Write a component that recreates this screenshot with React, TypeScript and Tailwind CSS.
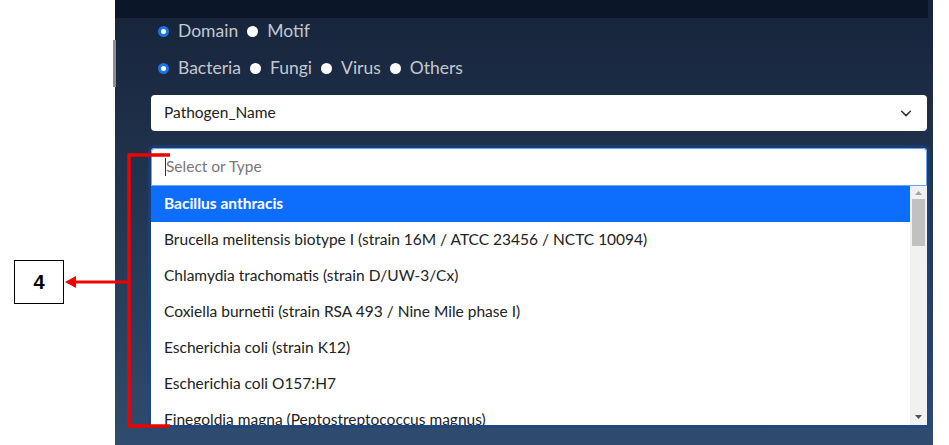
import React from 'react';

const pathogens = [
  'Bacillus anthracis',
  'Brucella melitensis biotype I (strain 16M / ATCC 23456 / NCTC 10094)',
  'Chlamydia trachomatis (strain D/UW-3/Cx)',
  'Coxiella burnetii (strain RSA 493 / Nine Mile phase I)',
  'Escherichia coli (strain K12)',
  'Escherichia coli O157:H7',
  'Finegoldia magna (Peptostreptococcus magnus)',
];

const Radio: React.FC<{ label: string; checked?: boolean }> = ({ label, checked }) => (
  <label className="flex items-center gap-[9px]">
    {checked ? (
      <span className="w-[11px] h-[11px] rounded-full border-[3px] border-[#1a73e8] bg-white" />
    ) : (
      <span className="w-[11px] h-[11px] rounded-full bg-white" />
    )}
    <span className="text-[17.5px] text-[#c3c8cf]">{label}</span>
  </label>
);

export default function App() {
  return (
    <div className="relative w-[949px] h-[445px] bg-white flex overflow-hidden" style={{ fontFamily: 'Lato, "Open Sans", sans-serif' }}>
      {/* annotation label */}
      <div className="w-[115px] shrink-0 pt-[260px] pl-[14px]">
        <div className="w-[50px] h-[44px] border border-black flex items-center justify-center text-[20px] font-bold text-black" style={{ fontFamily: '"Liberation Sans", Arial, sans-serif' }}>
          4
        </div>
      </div>

      {/* panel */}
      <div className="relative w-[818px] h-full bg-gradient-to-b from-[#17243a] to-[#2f4c6e] flex flex-col">
        <div className="h-[18px] bg-[#0b1729] mr-[5px]" />
        <div className="absolute left-[-2px] top-[40px] w-[3px] h-[47px] bg-[#8a8f96]" />

        <div className="pl-[36px] pr-[6px] flex flex-col">
          <div className="h-[26px] pl-[7px] flex items-center gap-[9px]">
            <Radio label="Domain" checked />
            <Radio label="Motif" />
          </div>
          <div className="h-[26px] pl-[7px] mt-[11px] flex items-center gap-[9px]">
            <Radio label="Bacteria" checked />
            <Radio label="Fungi" />
            <Radio label="Virus" />
            <Radio label="Others" />
          </div>

          <div className="mt-[14px] h-[36px] bg-white rounded-[4px] flex items-center justify-between pl-[13px] pr-[14px]">
            <span className="text-[15.5px] text-[#222]">Pathogen_Name</span>
            <svg width="14" height="14" viewBox="0 0 16 16" fill="none" stroke="#333" strokeWidth="1.8" strokeLinecap="round" strokeLinejoin="round">
              <path d="M3 6l5 5 5-5" />
            </svg>
          </div>

          <div className="mt-[17px] bg-white rounded-t-[4px] shadow-[0_0_0_3px_rgba(20,70,150,0.55)] flex flex-col">
            <div className="h-[38px] border border-[#6ea4ec] rounded-t-[4px] flex items-center pl-[13px]">
              <span className="w-px h-[18px] bg-[#333]" />
              <span className="text-[15.5px] text-[#777]">Select or Type</span>
            </div>
            <div className="h-[239px] flex overflow-hidden">
              <div className="flex-1 flex flex-col">
                {pathogens.map((p, i) => (
                  <div
                    key={p}
                    className={`h-[36px] shrink-0 flex items-center pl-[13px] pb-[1px] text-[15.5px] whitespace-nowrap ${i === 0 ? 'bg-[#0d6efd] text-white font-bold' : 'text-[#222]'}`}
                  >
                    {p}
                  </div>
                ))}
              </div>
              <div className="w-[17px] bg-[#f1f1f1] flex flex-col items-center">
                <svg className="mt-[5px]" width="7" height="4" viewBox="0 0 7 4"><path d="M0 4L3.5 0L7 4z" fill="#a3a3a3" /></svg>
                <div className="mt-[4px] w-[13px] h-[47px] bg-[#c1c1c1]" />
                <div className="flex-1" />
                <svg className="mb-[6px]" width="7" height="4" viewBox="0 0 7 4"><path d="M0 0L3.5 4L7 0z" fill="#505050" /></svg>
              </div>
            </div>
          </div>
        </div>
      </div>
      <div className="flex-1 bg-white" />

      {/* red bracket + arrow annotation */}
      <svg className="absolute left-0 top-0 pointer-events-none" width="949" height="445">
        <path d="M170 155H129V426H170" fill="none" stroke="#f00000" strokeWidth="3.5" />
        <path d="M129 282H74" stroke="#f00000" strokeWidth="3" />
        <path d="M65 282L76 276V288z" fill="#f00000" />
      </svg>
    </div>
  );
}
